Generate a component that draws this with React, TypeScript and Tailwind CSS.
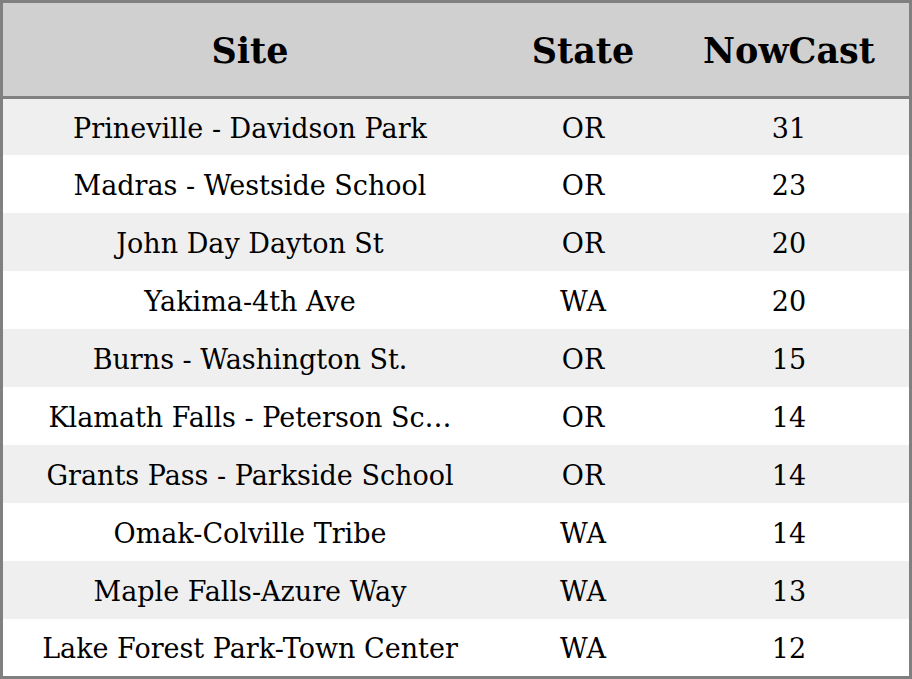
import React from "react";

const rows = [
  { site: "Prineville - Davidson Park", state: "OR", nowcast: 31 },
  { site: "Madras - Westside School", state: "OR", nowcast: 23 },
  { site: "John Day Dayton St", state: "OR", nowcast: 20 },
  { site: "Yakima-4th Ave", state: "WA", nowcast: 20 },
  { site: "Burns - Washington St.", state: "OR", nowcast: 15 },
  { site: "Klamath Falls - Peterson Sc…", state: "OR", nowcast: 14 },
  { site: "Grants Pass - Parkside School", state: "OR", nowcast: 14 },
  { site: "Omak-Colville Tribe", state: "WA", nowcast: 14 },
  { site: "Maple Falls-Azure Way", state: "WA", nowcast: 13 },
  { site: "Lake Forest Park-Town Center", state: "WA", nowcast: 12 },
];

const App = () => {
  return (
    <div
      className="w-[912px] h-[679px] overflow-hidden border-[3px] border-[#808080] bg-white text-black"
      style={{ fontFamily: '"DejaVu Serif", serif' }}
    >
      <div className="flex h-[96px] items-center pt-[3px] border-b-[3px] border-[#808080] bg-[#d0d0d0] text-[35px] font-bold">
        <div className="w-[494px] text-center">Site</div>
        <div className="w-[172px] text-center">State</div>
        <div className="flex-1 text-center">NowCast</div>
      </div>
      {rows.map((r, i) => (
        <div
          key={i}
          className={
            "flex items-center pt-[4px] text-[27px] " +
            (i % 2 === 0 ? "bg-[#efefef] " : "bg-white ") +
            (i === 0 || i === rows.length - 1 ? "h-[56px]" : "h-[58px]")
          }
        >
          <div className="w-[494px] text-center whitespace-nowrap">{r.site}</div>
          <div className="w-[172px] text-center">{r.state}</div>
          <div className="flex-1 text-center">{r.nowcast}</div>
        </div>
      ))}
    </div>
  );
};

export default App;
